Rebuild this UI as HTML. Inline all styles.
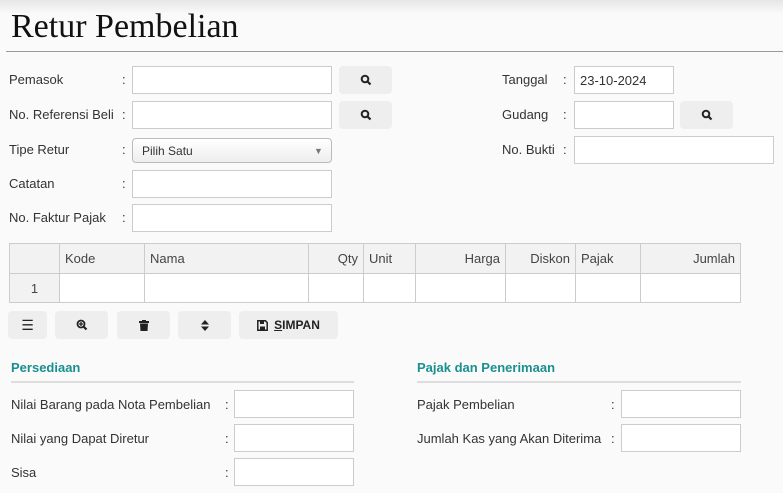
<!DOCTYPE html>
<html><head><meta charset="utf-8"><style>
*{box-sizing:border-box;margin:0;padding:0}
body{width:783px;height:493px;overflow:hidden;background:#fafafa;font-family:"Liberation Sans","DejaVu Sans",sans-serif;font-size:13px;color:#333;position:relative}
.a{position:absolute}
.top{left:0;top:0;width:783px;height:14px;background:linear-gradient(#e6e6e6,#fafafa)}
h1{position:absolute;left:11px;top:8px;font-family:"Liberation Serif",serif;font-weight:normal;font-size:34px;color:#111}
.hr{left:6px;top:51px;width:777px;height:1px;background:#999}
.l{position:absolute;white-space:nowrap;line-height:16px}
.in{position:absolute;background:#fff;border:1px solid #ccc;height:28px}
.btn{position:absolute;background:#eee;border-radius:4px;height:28px;display:flex;align-items:center;justify-content:center;font-weight:bold;font-size:12px;color:#222}
table{position:absolute;left:9px;top:243px;border-collapse:collapse;table-layout:fixed;width:731px}
td{border:1px solid #ccc;height:29px;padding:0 5px;color:#444;overflow:hidden;white-space:nowrap}
tr.h td{background:#f2f2f2;height:30px}
.sec{position:absolute;color:#1a8f8f;font-size:13px;font-weight:bold}
.sl{position:absolute;height:2px;background:#ddd}
</style></head><body>
<div class="a top"></div>
<h1>Retur Pembelian</h1>
<div class="a hr"></div>

<div class="l" style="left:9px;top:72px">Pemasok</div><div class="l" style="left:122px;top:72px">:</div>
<div class="in" style="left:132px;top:66px;width:200px"></div>
<div class="btn" style="left:339px;top:66px;width:53px"><svg width="12" height="12" viewBox="0 0 12 12"><circle cx="5" cy="5" r="3.3" fill="none" stroke="#222" stroke-width="2"/><path d="M7.5 7.5L10.5 10.5" stroke="#222" stroke-width="2.2"/></svg></div>
<div class="l" style="left:9px;top:107px">No. Referensi Beli</div><div class="l" style="left:122px;top:107px">:</div>
<div class="in" style="left:132px;top:101px;width:200px"></div>
<div class="btn" style="left:339px;top:101px;width:53px"><svg width="12" height="12" viewBox="0 0 12 12"><circle cx="5" cy="5" r="3.3" fill="none" stroke="#222" stroke-width="2"/><path d="M7.5 7.5L10.5 10.5" stroke="#222" stroke-width="2.2"/></svg></div>
<div class="l" style="left:9px;top:142px">Tipe Retur</div><div class="l" style="left:122px;top:142px">:</div>
<div class="in" style="left:132px;top:138px;width:200px;height:25px;border-radius:4px;background:linear-gradient(#fff,#eee);border-color:#bbb"><span class="l" style="left:9px;top:4px;font-size:12px">Pilih Satu</span><span class="l" style="left:181px;top:4px;font-size:9px;color:#777">▼</span></div>
<div class="l" style="left:9px;top:176px">Catatan</div><div class="l" style="left:122px;top:176px">:</div>
<div class="in" style="left:132px;top:170px;width:200px"></div>
<div class="l" style="left:9px;top:210px">No. Faktur Pajak</div><div class="l" style="left:122px;top:210px">:</div>
<div class="in" style="left:132px;top:204px;width:200px"></div>

<div class="l" style="left:502px;top:72px">Tanggal</div><div class="l" style="left:563px;top:72px">:</div>
<div class="in" style="left:574px;top:66px;width:100px"><span class="l" style="left:5px;top:6px">23-10-2024</span></div>
<div class="l" style="left:502px;top:107px">Gudang</div><div class="l" style="left:563px;top:107px">:</div>
<div class="in" style="left:574px;top:101px;width:100px"></div>
<div class="btn" style="left:680px;top:101px;width:53px"><svg width="12" height="12" viewBox="0 0 12 12"><circle cx="5" cy="5" r="3.3" fill="none" stroke="#222" stroke-width="2"/><path d="M7.5 7.5L10.5 10.5" stroke="#222" stroke-width="2.2"/></svg></div>
<div class="l" style="left:502px;top:142px">No. Bukti</div><div class="l" style="left:563px;top:142px">:</div>
<div class="in" style="left:574px;top:136px;width:200px"></div>

<table>
<colgroup><col style="width:50px"><col style="width:85px"><col style="width:164px"><col style="width:55px"><col style="width:52px"><col style="width:90px"><col style="width:70px"><col style="width:65px"><col style="width:100px"></colgroup>
<tr class="h"><td></td><td>Kode</td><td>Nama</td><td style="text-align:right">Qty</td><td>Unit</td><td style="text-align:right">Harga</td><td style="text-align:right">Diskon</td><td>Pajak</td><td style="text-align:right">Jumlah</td></tr>
<tr style="background:#fff"><td style="text-align:center;background:#f2f2f2">1</td><td></td><td></td><td></td><td></td><td></td><td></td><td></td><td></td></tr>
</table>

<div class="btn" style="left:8px;top:311px;width:39px;font-size:14px">☰</div>
<div class="btn" style="left:55px;top:311px;width:53px"><svg width="12" height="12" viewBox="0 0 12 12"><circle cx="5" cy="5" r="3.5" fill="none" stroke="#222" stroke-width="1.8"/><path d="M7.5 7.5L10.5 10.5" stroke="#222" stroke-width="2.2"/><path d="M3 5H7M5 3V7" stroke="#222" stroke-width="1.3"/></svg></div>
<div class="btn" style="left:117px;top:311px;width:53px"><svg width="10" height="11" viewBox="0 0 10 11"><rect x="0" y="1" width="10" height="2" fill="#222"/><rect x="3" y="0" width="4" height="2" fill="#222"/><path d="M1 3.5H9L8.5 11H1.5Z" fill="#222"/></svg></div>
<div class="btn" style="left:178px;top:311px;width:53px"><svg width="8" height="11" viewBox="0 0 8 11"><path d="M4 0L8 4.5H0Z M4 11L8 6.5H0Z" fill="#222"/></svg></div>
<div class="btn" style="left:239px;top:311px;width:99px"><svg width="11" height="11" viewBox="0 0 11 11" style="margin-right:6px"><path d="M0.8 0.8H8.5L10.2 2.5V10.2H0.8Z" fill="none" stroke="#222" stroke-width="1.5"/><rect x="3" y="1" width="4" height="3" fill="#222"/><rect x="3" y="6.5" width="5" height="3" fill="#222"/></svg><span><u>S</u>IMPAN</span></div>

<div class="sec" style="left:11px;top:360px">Persediaan</div>
<div class="sl" style="left:11px;top:381px;width:343px"></div>
<div class="l" style="left:11px;top:397px">Nilai Barang pada Nota Pembelian</div><div class="l" style="left:225px;top:397px">:</div>
<div class="in" style="left:234px;top:390px;width:120px;height:28px"></div>
<div class="l" style="left:11px;top:431px">Nilai yang Dapat Diretur</div><div class="l" style="left:225px;top:431px">:</div>
<div class="in" style="left:234px;top:424px;width:120px;height:28px"></div>
<div class="l" style="left:11px;top:465px">Sisa</div><div class="l" style="left:225px;top:465px">:</div>
<div class="in" style="left:234px;top:458px;width:120px;height:28px"></div>

<div class="sec" style="left:417px;top:360px">Pajak dan Penerimaan</div>
<div class="sl" style="left:417px;top:381px;width:324px"></div>
<div class="l" style="left:417px;top:397px">Pajak Pembelian</div><div class="l" style="left:611px;top:397px">:</div>
<div class="in" style="left:621px;top:390px;width:120px;height:28px"></div>
<div class="l" style="left:417px;top:431px">Jumlah Kas yang Akan Diterima</div><div class="l" style="left:611px;top:431px">:</div>
<div class="in" style="left:621px;top:424px;width:120px;height:28px"></div>
</body></html>
